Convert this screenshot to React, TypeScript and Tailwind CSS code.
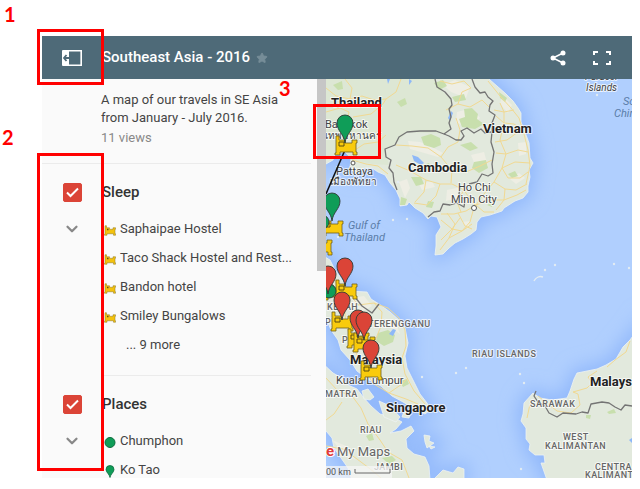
import { useState } from "react";
import { ChevronDown, Star } from "lucide-react";
import clsx from "clsx";

type Point = [number, number];

type LabelKind = "country" | "city" | "local" | "region" | "sea" | "island";

interface Place {
  name: string;
  icon: "bed" | "dot" | "pin";
}

interface Layer {
  id: string;
  title: string;
  places: Place[];
  more?: string;
}

const LAYERS: Layer[] = [
  {
    id: "sleep",
    title: "Sleep",
    places: [
      { name: "Saphaipae Hostel", icon: "bed" },
      { name: "Taco Shack Hostel and Rest...", icon: "bed" },
      { name: "Bandon hotel", icon: "bed" },
      { name: "Smiley Bungalows", icon: "bed" },
    ],
    more: "... 9 more",
  },
  {
    id: "places",
    title: "Places",
    places: [
      { name: "Chumphon", icon: "dot" },
      { name: "Ko Tao", icon: "pin" },
    ],
  },
];

const LAND = [
  // indochina
  "M320 70H484L489 79 497 86 505 93 513 101 518 108 521 113 521 122 525 132 529 143 530 158 533 163 529 170 530 177 528 186 528 192 523 198 515 201 504 208 502 211 490 215 481 217 477 222 476 230 471 234 463 239 455 243 449 248 443 254 435 255 436 246 436 235 441 227 437 217 431 216 428 219 423 213 415 208 409 202 407 205 400 206 400 199 396 190 390 183 385 175 378 172 372 168 365 168 355 173 350 168 351 158 345 152 336 152 333 160 326 164 320 164Z",
  // malay peninsula
  "M320 254 330 260 334 268 342 280 348 291 367 292 371 299 379 304 390 312 399 320 405 328 408 343 405 356 407 368 413 380 420 394 427 403 430 410 425 414 416 410 403 402 392 396 381 386 369 380 357 371 350 360 341 350 338 340 331 330 326 318 320 312Z",
  // sumatra
  "M320 361 333 373 342 378 348 385 357 389 364 398 371 406 380 414 393 417 402 422 396 429 390 433 401 431 411 426 414 431 406 439 407 448 414 454 425 457 429 466 430 480H352L348 468 341 458 334 448 332 438 326 431 320 428Z",
  "M362 391 368 389 374 397 370 400 364 399Z",
  "M379 401 390 406 400 417 396 422 384 417Z",
  "M404 411 411 413 409 418 402 417Z",
  // bangka
  "M433 480 443 470 453 473 458 467 464 469 464 480Z",
  // borneo
  "M640 326 630 340 623 347 616 359 606 365 597 369 577 373 574 379 570 391 567 398 552 400 540 398 533 393 524 403 523 414 521 421 526 428 526 439 530 444 529 450 535 455 544 455 545 463 541 463 547 480H640Z",
  "M424 435 430 436 429 441 434 443 427 448 425 442Z",
  "M429 446 435 447 431 449Z",
];

const TERRAIN = [
  "M443 85 455 80 470 87 466 98 451 92Z",
  "M457 112 472 108 480 118 467 128 456 122Z",
  "M408 141 420 142 432 147 443 153 438 157 421 152 410 149Z",
  "M471 155 484 152 488 166 478 172Z",
  "M419 184 432 181 435 187 422 190Z",
  "M399 182 407 179 410 188 405 198Z",
  "M447 190 461 187 460 197 446 201Z",
  "M510 179 519 173 525 178 516 184Z",
  "M502 95 512 105 508 113 500 104Z",
  "M518 143 526 142 526 154 519 156Z",
  "M462 222 470 221 468 229Z",
  "M352 298 364 296 372 306 362 312 354 306Z",
  "M384 318 396 324 400 334 392 328Z",
  "M332 440 346 446 356 460 346 456Z",
];

const PARKS = [
  "M434 83 443 80 447 86 439 90Z",
  "M464 109 472 108 478 114 477 119 484 124 475 129 462 127 459 119 465 117Z",
  "M452 97 464 94 466 100 455 102Z",
  "M421 137 431 134 440 138 441 145 434 148 424 145Z",
  "M460 145 471 142 478 148 470 151Z",
  "M474 162 486 160 488 168 479 173 472 168Z",
  "M411 177 421 177 424 184 416 186Z",
  "M423 165 429 163 431 168 426 171Z",
  "M428 201 434 202 432 208 426 207Z",
  "M401 197 407 199 405 205 400 205Z",
  "M397 102 405 98 407 104 401 107Z",
  "M333 85 342 81 343 89 338 90Z",
  "M499 92 507 98 505 102 500 98Z",
  "M487 205 493 202 492 207Z",
  "M508 174 515 171 518 176 512 178Z",
  "M378 333 388 330 395 335 393 342 384 346 376 341Z",
  "M399 381 407 379 409 384 403 387Z",
  "M366 436 372 433 374 440 369 441Z",
  "M382 458 392 456 396 460 389 464Z",
  "M607 412 614 409 616 413 609 414Z",
  "M586 415 591 415 590 419 586 418Z",
];

const LAKES = [
  "M412 155 418 157 424 163 421 165 414 161Z",
  "M451 111 453 113 450 121 448 118Z",
  "M387 79 390 79 388 84Z",
  "M409 79 412 81 409 85Z",
  "M389 334 393 329 396 330 393 336Z",
  "M629 440 632 438 632 443Z",
];

const ROADS = [
  "M326 88 336 96 350 99 362 96 374 100 386 99 396 92 401 79",
  "M345 79 352 88 350 99",
  "M326 112 340 108 349 112 346 124",
  "M352 152 364 144 378 142 386 135",
  "M352 160 366 164 378 166 388 174",
  "M353 117 371 114 383 104 386 99",
  "M440 81 452 84 464 81 471 88",
  "M446 110 458 104 470 107 482 100 490 108",
  "M458 104 462 92 471 88",
  "M396 145 412 146 428 148 441 157 452 170 451 183",
  "M396 165 410 171 426 180 440 184 452 184",
  "M441 157 448 147 458 142 460 130 456 118",
  "M426 180 424 192 415 202",
  "M440 184 436 196 427 205 414 203",
  "M452 184 464 190 470 199 476 206",
  "M452 170 466 172 480 166 492 160",
  "M464 190 457 202 461 212",
  "M488 81 500 96 511 108 519 118 524 134 528 150 530 166 526 184",
  "M494 110 504 112 514 110",
  "M496 116 504 123 514 124 523 130",
  "M500 103 504 112 504 123 500 140 506 154 502 168",
  "M502 168 515 162 530 163",
  "M495 142 507 140 518 132",
  "M496 153 506 154 518 150 528 152",
  "M502 168 508 178 520 178 528 172",
  "M502 168 494 182 484 194 476 205",
  "M494 182 505 189 516 190 527 184",
  "M505 189 504 200 496 210",
  "M476 205 490 200 504 200 517 195 526 190",
  "M476 205 484 212 494 212",
  "M476 205 466 211 454 214 441 214",
  "M473 211 470 222 462 231 449 238 440 250",
  "M441 220 452 229 462 231 472 224",
  "M447 213 455 224 449 238",
  "M458 213 465 226 472 229",
  "M441 240 452 229 460 218",
  "M349 293 358 305 374 303 388 308 399 318 405 330 406 346 402 358 405 374 414 391 425 404",
  "M374 303 382 312 381 326 375 341 370 352 366 372",
  "M332 266 336 284 344 304 346 324 352 344 364 370 374 384 389 393 406 399 418 404",
  "M389 393 402 384 408 378",
  "M326 378 338 391 352 396 361 408 368 424 380 440 388 452 402 460 409 478",
  "M326 446 343 449 357 459 369 468 381 478",
  "M342 402 334 414 326 420",
  "M630 341 626 352 615 360 607 367",
  "M538 396 548 404 557 411 571 413 580 405 578 394 573 392 587 388 592 383 588 377 597 371",
  "M530 404 527 418",
];

const BORDERS = [
  "M435 79 437 87 445 92 451 99 452 105 449 109 451 117 449 123 451 129 444 134 436 131 420 131 407 132 399 137 395 145 385 149 386 157 391 160 389 168 393 173 394 182 397 190",
  "M444 134 449 136 456 140 461 140 464 136 461 131 467 128 474 133 481 129 485 133 491 132",
  "M472 79 475 87 480 93 485 92 488 97 493 101 490 105 489 111 495 115 492 123 492 132 491 142 494 152 492 164 493 173 488 176 482 174 477 182 469 184",
  "M460 187 459 194 465 200 464 207 457 203 450 205 443 204 440 211 434 212 428 217",
  "M355 297 362 306 372 313 379 304",
  "M536 391 534 396 538 402 545 406 549 413 557 417 563 413 576 414 582 412 588 413 591 404 602 402 609 403 615 407 621 410 625 405 632 406",
];

const ISLETS: Point[] = [
  [422, 377],
  [407, 219],
  [398, 182],
  [393, 220],
  [545, 270],
  [555, 265],
  [614, 264],
  [456, 373],
  [466, 368],
  [520, 374],
  [524, 383],
  [521, 469],
  [597, 95],
  [629, 268],
  [338, 237],
];

const LABELS: { text: string; at: Point; kind: LabelKind }[] = [
  { text: "Thailand", at: [331, 107], kind: "country" },
  { text: "Vietnam", at: [483, 133], kind: "country" },
  { text: "Cambodia", at: [408, 172], kind: "country" },
  { text: "Malaysia", at: [350, 364], kind: "country" },
  { text: "Singapore", at: [386, 412], kind: "country" },
  { text: "Malays", at: [590, 386], kind: "country" },
  { text: "Bangkok", at: [325, 128], kind: "city" },
  { text: "เทพมหานคร", at: [325, 139], kind: "local" },
  { text: "Pattaya", at: [336, 175], kind: "city" },
  { text: "เมืองพัทยา", at: [330, 185], kind: "local" },
  { text: "Ho Chi", at: [458, 191], kind: "city" },
  { text: "Minh City", at: [451, 203], kind: "city" },
  { text: "Kuala Lumpur", at: [336, 384], kind: "city" },
  { text: "Gulf of", at: [348, 229], kind: "sea" },
  { text: "Thailand", at: [344, 241], kind: "sea" },
  { text: "So", at: [623, 105], kind: "sea" },
  { text: "Chir", at: [614, 117], kind: "sea" },
  { text: "Paracel", at: [585, 80], kind: "island" },
  { text: "Islands", at: [586, 91], kind: "island" },
  { text: "KEDAH", at: [327, 310], kind: "region" },
  { text: "PE", at: [325, 325], kind: "region" },
  { text: "TERENGGANU", at: [368, 327], kind: "region" },
  { text: "P", at: [342, 343], kind: "region" },
  { text: "RIAU ISLANDS", at: [472, 357], kind: "region" },
  { text: "MATRA", at: [325, 397], kind: "region" },
  { text: "RIAU", at: [360, 433], kind: "region" },
  { text: "SARAWAK", at: [530, 407], kind: "region" },
  { text: "WEST", at: [563, 440], kind: "region" },
  { text: "KALIMANTAN", at: [545, 449], kind: "region" },
  { text: "CENTRA", at: [595, 470], kind: "region" },
  { text: "KALIMANT", at: [585, 478], kind: "region" },
  { text: "JAMBI", at: [374, 470], kind: "region" },
];

const BEDS: Point[] = [
  [335, 136],
  [321, 217],
  [310, 236],
  [323, 281],
  [335, 280],
  [331, 312],
  [347, 329],
  [353, 333],
  [360, 361],
];

const DOTS: Point[] = [
  [322, 222],
  [329, 291],
];

const PINS: { at: Point; color: string }[] = [
  { at: [345, 143], color: "#0f9d58" },
  { at: [332, 221], color: "#0f9d58" },
  { at: [345, 286], color: "#db4437" },
  { at: [328, 294], color: "#db4437" },
  { at: [342, 320], color: "#db4437" },
  { at: [358, 338], color: "#db4437" },
  { at: [364, 340], color: "#db4437" },
  { at: [371, 368], color: "#db4437" },
];

const BED_PATH =
  "M1 0H4V4H10V7H17V4H22V7H21V16H22V19H18V16H5V19H0V17H1Z";
const PIN_PATH =
  "M0 0C-1 -9 -8 -12 -8 -20A8 8 0 0 1 8 -20C8 -12 1 -9 0 0Z";

const LABEL_STYLES: Record<LabelKind, string> = {
  country: "fill-[#222] text-[13px] font-bold",
  city: "fill-[#444] text-[11px]",
  local: "fill-[#444] text-[10px]",
  region: "fill-[#666] text-[9px] font-medium tracking-wider",
  sea: "fill-[#5b7da8] text-[11px] italic",
  island: "fill-[#444] text-[10px] italic",
};

function PlaceIcon({ icon }: { icon: Place["icon"] }) {
  if (icon === "bed") {
    return (
      <svg viewBox="-1 -1 24 21" className="mt-[3px] h-[11px] w-3">
        <path d={BED_PATH} fill="#f4c20d" stroke="#8a7424" strokeWidth="1" />
        <path d="M5 6H8V9H5Z" fill="#5f5018" />
      </svg>
    );
  }

  return (
    <svg viewBox="0 0 12 13" className="mt-[3px] h-[13px] w-3">
      {icon === "dot" ? (
        <circle cx="6" cy="6.5" r="5" fill="#0f9d58" stroke="#0b6b3c" />
      ) : (
        <path
          d="M6 12.5C5.5 9 2 7.5 2 4.5A4 4 0 0 1 10 4.5C10 7.5 6.5 9 6 12.5Z"
          fill="#0f9d58"
          stroke="#0b6b3c"
          strokeWidth="0.8"
        />
      )}
    </svg>
  );
}

function LayerSection({ layer, inset }: { layer: Layer; inset: boolean }) {
  const [checked, setChecked] = useState(true);
  const [open, setOpen] = useState(true);

  return (
    <section>
      <hr className={clsx("mr-1.5 border-[#ebebeb]", inset && "ml-15")} />
      <div className="grid grid-cols-[60px_1fr] gap-y-2.5 pt-4 pb-4">
        <span className="relative grid place-items-center">
          <input
            id={layer.id}
            type="checkbox"
            checked={checked}
            onChange={() => setChecked(!checked)}
            className="size-[19px] appearance-none rounded-xs border border-[#db4437] checked:bg-[#db4437]"
          />
          {checked && (
            <svg
              viewBox="0 0 19 19"
              className="pointer-events-none absolute size-[19px]"
            >
              <path
                d="M4 9.5 7.5 13 15 5.5"
                fill="none"
                stroke="#fff"
                strokeWidth="2"
              />
            </svg>
          )}
        </span>
        <label
          htmlFor={layer.id}
          className="text-[15px] leading-6 font-medium text-[#333]"
        >
          {layer.title}
        </label>
        <button
          type="button"
          aria-label={`Toggle ${layer.title}`}
          aria-expanded={open}
          onClick={() => setOpen(!open)}
          className="flex h-[29px] items-center justify-center text-[#888]"
        >
          <ChevronDown size={18} strokeWidth={3} />
        </button>
        {open && (
          <ul className="text-[13px] text-[#444]">
            {layer.places.map((place) => (
              <li
                key={place.name}
                className="flex h-[29px] items-center gap-1 pl-0.5"
              >
                <PlaceIcon icon={place.icon} />
                <span className="whitespace-nowrap">{place.name}</span>
              </li>
            ))}
            {layer.more && (
              <li className="flex h-[29px] items-center pl-6">{layer.more}</li>
            )}
          </ul>
        )}
      </div>
    </section>
  );
}

function SidePanel() {
  return (
    <aside className="flex w-[284px] shrink-0 bg-[#fafafa]">
      <div className="flex-1 overflow-hidden">
        <div className="pt-3 pb-4 pl-[59px] text-[13px] leading-[18px] text-[#444]">
          <p>
            A map of our travels in SE Asia
            <br />
            from January - July 2016.
          </p>
          <p className="mt-0.5 text-[#888]">11 views</p>
        </div>
        {LAYERS.map((layer, i) => (
          <LayerSection key={layer.id} layer={layer} inset={i > 0} />
        ))}
      </div>
      <div className="w-[9px]">
        <div className="h-[48%] bg-[#c6c6c6]" />
      </div>
    </aside>
  );
}

function TravelMap() {
  return (
    <div className="relative min-w-0 flex-1 overflow-hidden bg-[#b0cffe]">
      <svg
        viewBox="326 79 306 399"
        preserveAspectRatio="xMinYMin slice"
        className="absolute inset-0 size-full"
      >
        <defs>
          <filter id="shelf" x="-20%" y="-20%" width="140%" height="140%">
            <feGaussianBlur stdDeviation="9" />
          </filter>
        </defs>
        <g filter="url(#shelf)" fill="#91b8fb" stroke="#91b8fb" strokeWidth="10">
          {LAND.map((d) => (
            <path key={d} d={d} />
          ))}
        </g>
        <g fill="#e2e9dd" stroke="#eef3f3" strokeWidth="0.8">
          {LAND.map((d) => (
            <path key={d} d={d} />
          ))}
        </g>
        <path
          d="M326 79H435L438 87 451 99 451 129 444 134 407 132 395 145 385 149 389 165 372 164 352 160 345 152 326 158Z"
          fill="#dde7d4"
        />
        <g fill="#eeeee4">
          {TERRAIN.map((d) => (
            <path key={d} d={d} />
          ))}
        </g>
        <g fill="#c8dfad">
          {PARKS.map((d) => (
            <path key={d} d={d} />
          ))}
        </g>
        <g fill="#8db8f8">
          {LAKES.map((d) => (
            <path key={d} d={d} />
          ))}
        </g>
        <g fill="none" stroke="#f1d992" strokeLinejoin="round">
          {ROADS.map((d) => (
            <path key={d} d={d} />
          ))}
        </g>
        <g
          fill="none"
          stroke="#747474"
          strokeWidth="1.3"
          strokeLinejoin="round"
        >
          {BORDERS.map((d) => (
            <path key={d} d={d} />
          ))}
        </g>
        {ISLETS.map(([x, y]) => (
          <circle key={`${x}-${y}`} cx={x} cy={y} r="1.2" fill="#e3ecf2" />
        ))}
        <path
          d="M534 281C536 277 540 276 543 277"
          fill="none"
          stroke="#e3ecf2"
          strokeWidth="1.5"
        />

        <g
          className="font-[Roboto,'Noto_Sans',sans-serif] [paint-order:stroke]"
          stroke="#fff"
          strokeWidth="2"
          strokeLinejoin="round"
        >
          {LABELS.map(({ text, at: [x, y], kind }) => (
            <text
              key={`${text}-${y}`}
              x={x}
              y={y}
              className={LABEL_STYLES[kind]}
              strokeOpacity={kind === "sea" ? 0 : 0.7}
            >
              {text}
            </text>
          ))}
        </g>
        <g fill="#fff" stroke="#555">
          <circle cx="353" cy="163" r="2" />
          <circle cx="474" cy="208" r="2.5" />
        </g>

        <path d="M345 150 326 194" stroke="#111" strokeWidth="1.5" />
        {BEDS.map(([x, y]) => (
          <g key={`${x}-${y}`} transform={`translate(${x} ${y})`}>
            <path d={BED_PATH} fill="#f9cb0c" stroke="#6f611f" strokeWidth="0.8" />
            <path d="M4 6H9V10H4Z" fill="#f9cb0c" stroke="#5b4c10" />
          </g>
        ))}
        {DOTS.map(([x, y]) => (
          <circle
            key={`${x}-${y}`}
            cx={x}
            cy={y}
            r="7"
            fill="#0f9d58"
            stroke="#2f3b35"
            strokeWidth="0.9"
          />
        ))}
        {PINS.map(({ at: [x, y], color }) => (
          <path
            key={`${x}-${y}`}
            d={PIN_PATH}
            transform={`translate(${x} ${y})`}
            fill={color}
            stroke="#2f3b35"
            strokeWidth="0.9"
          />
        ))}

        <g className="font-[Roboto,sans-serif] [paint-order:stroke]">
          <text
            x="326"
            y="456"
            stroke="#fff"
            strokeWidth="2"
            className="fill-[#e23b3b] text-[15px] font-bold"
          >
            e
          </text>
          <text
            x="337"
            y="456"
            stroke="#fff"
            strokeWidth="2"
            strokeOpacity="0.7"
            className="fill-[#666] text-[13px]"
          >
            My Maps
          </text>
          <rect
            x="326"
            y="466"
            width="66"
            height="12"
            fill="#f5f5f5"
            fillOpacity="0.75"
          />
          <text x="326" y="475" className="fill-[#555] text-[9px]">
            00 km
          </text>
          <path d="M355 469V473H390V469" fill="none" stroke="#666" />
        </g>
      </svg>
    </div>
  );
}

function Header() {
  return (
    <header className="flex h-[43px] shrink-0 items-center bg-[#4e6a78] pr-5 text-white">
      <button
        type="button"
        aria-label="Hide legend"
        className="flex w-15 justify-center"
      >
        <svg viewBox="0 0 22 18" className="h-[18px] w-[22px]">
          <path
            d="M8 1.8H20.2V16.2H8"
            fill="none"
            stroke="#fff"
            strokeWidth="1.6"
          />
          <path d="M2 1H8V17H2Q1 17 1 16V2Q1 1 2 1Z" fill="#fff" />
          <path
            d="M5.500 6 3 9 5.500 12M3 9H8"
            fill="none"
            stroke="#4e6a78"
            strokeWidth="1.8"
          />
        </svg>
      </button>
      <h1 className="text-[15px] font-medium whitespace-nowrap">
        Southeast Asia - 2016
      </h1>
      <button type="button" aria-label="Star map" className="ml-1.5">
        <Star size={12} className="fill-[#768d98] text-[#768d98]" />
      </button>
      <div className="ml-auto flex items-center gap-[26px]">
        <button type="button" aria-label="Share map">
          <svg viewBox="0 0 16 16" className="size-4">
            <path
              d="M13 3 3 8 13 13"
              fill="none"
              stroke="#fff"
              strokeWidth="1.5"
            />
            <g fill="#fff">
              <circle cx="13" cy="3" r="2.5" />
              <circle cx="3" cy="8" r="2.5" />
              <circle cx="13" cy="13" r="2.5" />
            </g>
          </svg>
        </button>
        <button type="button" aria-label="View larger map">
          <svg viewBox="0 0 20 16" className="h-4 w-5">
            <path
              d="M2 5V2H6M14 2H18V5M18 11V14H14M6 14H2V11"
              fill="none"
              stroke="#fff"
              strokeWidth="2"
            />
          </svg>
        </button>
      </div>
    </header>
  );
}

function Annotations() {
  return (
    <div className="pointer-events-none font-[Lato,sans-serif] text-xl leading-5 font-bold text-[#f00]">
      <span className="absolute top-1 left-1">1</span>
      <span className="absolute top-[127px] left-0.5">2</span>
      <span className="absolute top-[78px] left-[279px]">3</span>
      <div className="absolute top-[29px] left-[37px] h-14 w-[67px] border-3 border-[#f00]" />
      <div className="absolute top-[153px] left-[37px] h-[318px] w-[67px] border-3 border-[#f00]" />
      <div className="absolute top-[104px] left-[313px] h-[55px] w-[68px] border-3 border-[#f00]" />
    </div>
  );
}

export default function App() {
  return (
    <div className="relative flex h-screen flex-col bg-white pt-9 pr-2 pb-[11px] pl-[42px] font-[Roboto,sans-serif]">
      <Header />
      <main className="flex min-h-0 flex-1 overflow-hidden">
        <SidePanel />
        <TravelMap />
      </main>
      <Annotations />
    </div>
  );
}
